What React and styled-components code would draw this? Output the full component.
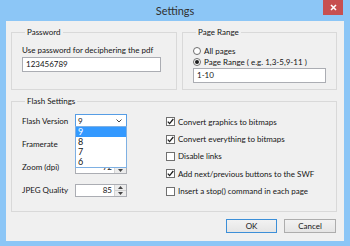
import React from 'react';
import styled, { createGlobalStyle } from 'styled-components';

const GlobalStyle = createGlobalStyle`
  html, body { margin: 0; padding: 0; }
  body {
    font-family: "Lato", "Liberation Sans", sans-serif;
    font-size: 8px;
    color: #151515;
  }
  * { box-sizing: border-box; }
`;

const Window = styled.div`
  width: 350px;
  height: 246px;
  background: #8cc6f6;
  padding: 0 6px 5px;
  display: flex;
  flex-direction: column;
`;

const TitleBar = styled.div`
  height: 21px;
  display: grid;
  grid-template-columns: 1fr auto 1fr;
  align-items: start;
`;

const Title = styled.div`
  grid-column: 2;
  font-size: 11px;
  line-height: 22px;
  color: #303030;
`;

const CloseButton = styled.div`
  grid-column: 3;
  justify-self: end;
  margin-right: 1px;
  width: 20px;
  height: 15px;
  background: #c75050;
  display: flex;
  align-items: center;
  justify-content: center;
`;

const Client = styled.div`
  flex: 1;
  background: #f0f0f0;
  padding: 6px 7px 0 5px;
  display: flex;
  flex-direction: column;
`;

const TopRow = styled.div`
  display: flex;
  gap: 5px;
`;

const Group = styled.fieldset`
  margin: ${p => p.$mt || '0'} 0 0;
  width: ${p => p.$width || 'auto'};
  height: ${p => p.$height};
  border: 1px solid #d9d9d9;
  padding: ${p => p.$pad || '8px 10px 0'};
  min-width: 0;
`;

const Legend = styled.legend`
  padding: 0 2px;
  margin-left: 3px;
  line-height: 10px;
`;

const Label = styled.div`
  line-height: 10px;
`;

const TextInput = styled.div`
  margin-top: ${p => p.$mt || '2px'};
  width: ${p => p.$width};
  height: 15px;
  background: #fff;
  border: 1px solid #abadb3;
  padding-left: 3px;
  line-height: 13px;
`;

const RadioRow = styled.div`
  display: flex;
  align-items: center;
  gap: 3px;
  height: 11px;
`;

const RadioCircle = styled.span`
  width: 8px;
  height: 8px;
  border-radius: 50%;
  border: 1px solid #6e6e6e;
  background: #fff;
  display: flex;
  align-items: center;
  justify-content: center;
  &::after {
    content: '';
    width: 4px;
    height: 4px;
    border-radius: 50%;
    background: ${p => (p.$checked ? '#1e1e1e' : 'transparent')};
  }
`;

const FlashBody = styled.div`
  display: flex;
  gap: 39px;
`;

const LeftColumn = styled.div`
  width: 105px;
  display: grid;
  grid-auto-rows: 13px;
  row-gap: 10.3px;
  padding-top: 3px;
`;

const FieldRow = styled.div`
  display: grid;
  grid-template-columns: 53px 52px;
  align-items: center;
`;

const SelectWrap = styled.div`
  position: relative;
  height: 13px;
`;

const SelectBox = styled.div`
  height: 13px;
  border: 1px solid #569de5;
  background: #fff;
  display: flex;
  align-items: center;
  justify-content: space-between;
  padding: 0 4px 0 2px;
`;

const DropList = styled.div`
  position: absolute;
  top: 12px;
  left: 0;
  width: 52px;
  height: 42px;
  background: #fff;
  border: 1px solid #7eb0e3;
  z-index: 2;
`;

const DropItem = styled.div`
  height: 10px;
  line-height: 10px;
  padding-left: 2px;
  font-size: 9px;
  background: ${p => (p.$active ? '#3399ff' : 'transparent')};
  color: ${p => (p.$active ? '#fff' : '#151515')};
`;

const SpinBox = styled.div`
  height: 13px;
  border: 1px solid #abadb3;
  background: #fff;
  display: flex;
`;

const SpinValue = styled.div`
  flex: 1;
  text-align: right;
  padding-right: 2px;
  line-height: 11px;
`;

const SpinButtons = styled.div`
  width: 12px;
  display: flex;
  flex-direction: column;
  border-left: 1px solid #d5d5d5;
  background: #ececec;
`;

const SpinArrow = styled.div`
  flex: 1;
  display: flex;
  align-items: center;
  justify-content: center;
  border-top: ${p => (p.$down ? '1px solid #d0d0d0' : 'none')};
`;

const RightColumn = styled.div`
  display: grid;
  grid-auto-rows: 17.4px;
  padding-top: 2px;
`;

const CheckRow = styled.div`
  display: flex;
  align-items: center;
  gap: 3px;
`;

const CheckBox = styled.span`
  width: 9px;
  height: 9px;
  border: 1px solid #707070;
  background: #fff;
  display: flex;
  align-items: center;
  justify-content: center;
`;

const ButtonRow = styled.div`
  display: flex;
  justify-content: flex-end;
  gap: 7px;
  margin-top: 7px;
  padding-right: 1px;
`;

const Button = styled.div`
  width: ${p => p.$width};
  height: 14px;
  border: 1px solid ${p => (p.$primary ? '#3c8fd8' : '#adadad')};
  background: linear-gradient(#f2f2f2, #e5e5e5);
  display: flex;
  align-items: center;
  justify-content: center;
`;

function Check({ checked, children }) {
  return (
    <CheckRow>
      <CheckBox>
        {checked && (
          <svg width="7" height="7" viewBox="0 0 7 7">
            <path d="M0.8 3.6 L2.6 5.6 L6.3 1" fill="none" stroke="#1e1e1e" strokeWidth="1.3" />
          </svg>
        )}
      </CheckBox>
      {children}
    </CheckRow>
  );
}

function Spinner({ value }) {
  return (
    <SpinBox>
      <SpinValue>{value}</SpinValue>
      <SpinButtons>
        <SpinArrow>
          <svg width="5" height="3" viewBox="0 0 5 3"><path d="M0 3 L2.5 0 L5 3 Z" fill="#444" /></svg>
        </SpinArrow>
        <SpinArrow $down>
          <svg width="5" height="3" viewBox="0 0 5 3"><path d="M0 0 L2.5 3 L5 0 Z" fill="#444" /></svg>
        </SpinArrow>
      </SpinButtons>
    </SpinBox>
  );
}

export default function App() {
  return (
    <>
      <GlobalStyle />
      <Window>
        <TitleBar>
          <Title>Settings</Title>
          <CloseButton>
            <svg width="7" height="7" viewBox="0 0 7 7">
              <path d="M1 1 L6 6 M6 1 L1 6" stroke="#fff" strokeWidth="1.6" />
            </svg>
          </CloseButton>
        </TitleBar>
        <Client>
          <TopRow>
            <Group $width="166px" $height="63px">
              <Legend>Password</Legend>
              <Label>Use password for deciphering the pdf</Label>
              <TextInput $width="139px">123456789</TextInput>
            </Group>
            <Group $width="155px" $height="63px">
              <Legend>Page Range</Legend>
              <RadioRow>
                <RadioCircle />
                All pages
              </RadioRow>
              <RadioRow>
                <RadioCircle $checked />
                Page Range ( e.g. 1,3-5,9-11 )
              </RadioRow>
              <TextInput $width="133px" $mt="1px">1-10</TextInput>
            </Group>
          </TopRow>
          <Group $height="116px" $pad="5px 10px 0" $mt="6px">
            <Legend>Flash Settings</Legend>
            <FlashBody>
              <LeftColumn>
                <FieldRow>
                  <span>Flash Version</span>
                  <SelectWrap>
                    <SelectBox>
                      <span>9</span>
                      <svg width="6" height="4" viewBox="0 0 6 4">
                        <path d="M0.5 0.5 L3 3 L5.5 0.5" fill="none" stroke="#444" strokeWidth="1" />
                      </svg>
                    </SelectBox>
                    <DropList>
                      <DropItem $active>9</DropItem>
                      <DropItem>8</DropItem>
                      <DropItem>7</DropItem>
                      <DropItem>6</DropItem>
                    </DropList>
                  </SelectWrap>
                </FieldRow>
                <FieldRow>
                  <span>Framerate</span>
                  <Spinner value="15" />
                </FieldRow>
                <FieldRow>
                  <span>Zoom (dpi)</span>
                  <Spinner value="72" />
                </FieldRow>
                <FieldRow>
                  <span>JPEG Quality</span>
                  <Spinner value="85" />
                </FieldRow>
              </LeftColumn>
              <RightColumn>
                <Check checked>Convert graphics to bitmaps</Check>
                <Check checked>Convert everything to bitmaps</Check>
                <Check>Disable links</Check>
                <Check checked>Add next/previous buttons to the SWF</Check>
                <Check>Insert a stop() command in each page</Check>
              </RightColumn>
            </FlashBody>
          </Group>
          <ButtonRow>
            <Button $primary $width="51px">OK</Button>
            <Button $width="52px">Cancel</Button>
          </ButtonRow>
        </Client>
      </Window>
    </>
  );
}
